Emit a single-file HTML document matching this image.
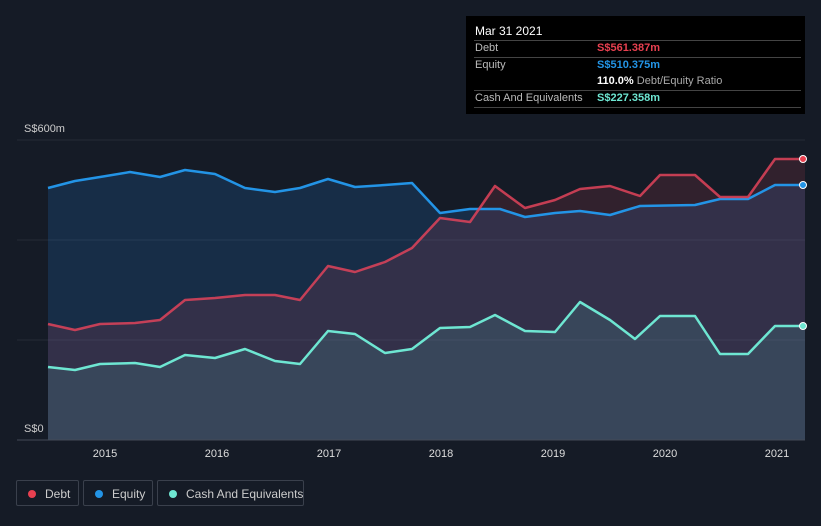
<!DOCTYPE html><html><head><style>
body{margin:0;width:821px;height:526px;background:#151b26;font-family:"Liberation Sans",sans-serif;overflow:hidden;position:relative}
.tip{position:absolute;left:466px;top:16px;width:339px;height:98px;background:#000;color:#bbb;font-size:11px}
.tip .r{position:absolute;left:8px;width:327px;border-top:1px solid #444}
.leg{position:absolute;top:480px;height:26px;border:1px solid #3a404c;border-radius:2px;color:#ccc;font-size:12px;line-height:26px;box-sizing:border-box;white-space:nowrap}
.leg i{position:absolute;left:11px;top:9px;width:8px;height:8px;border-radius:50%}
.leg span{position:absolute;left:28px}
</style></head><body>
<svg width="821" height="526" style="position:absolute;left:0;top:0">
<g stroke="#252b37" stroke-width="1"><line x1="17" y1="140" x2="805" y2="140"/><line x1="17" y1="240" x2="805" y2="240"/><line x1="17" y1="340" x2="805" y2="340"/></g>
<polygon fill="rgba(33,130,220,0.18)" points="48,188 75,181 100,177 130,172 160,177 185,170 215,174 245,188 275,192 300,188 328,179 355,187 385,185 412,183 440,213 470,209 500,209 525,217 555,213 580,211 610,215 640,206 695,205 720,199 748,199 775,185 805,185 805,440 48,440"/>
<polygon fill="rgba(200,70,90,0.16)" points="48,324 75,330 100,324 135,323 160,320 185,300 215,298 245,295 275,295 300,300 328,266 355,272 385,262 412,248 440,218 470,222 495,186 525,208 555,200 580,189 610,186 640,196 660,175 695,175 720,197 748,197 775,159 805,159 805,440 48,440"/>
<polygon fill="rgba(100,230,210,0.12)" points="48,367 75,370 100,364 135,363 160,367 185,355 215,358 245,349 275,361 300,364 328,331 355,334 385,353 412,349 440,328 470,327 495,315 525,331 555,332 580,302 610,320 635,339 660,316 695,316 720,354 748,354 775,326 805,326 805,440 48,440"/>
<line x1="17" y1="440" x2="805" y2="440" stroke="#444a55"/>
<text x="24" y="132" fill="#ccc" font-size="11" font-family="Liberation Sans">S$600m</text>
<text x="24" y="432" fill="#ccc" font-size="11" font-family="Liberation Sans">S$0</text>
<g fill="#ddd" font-size="11" font-family="Liberation Sans" text-anchor="middle"><text x="105" y="457">2015</text><text x="217" y="457">2016</text><text x="329" y="457">2017</text><text x="441" y="457">2018</text><text x="553" y="457">2019</text><text x="665" y="457">2020</text><text x="777" y="457">2021</text></g>
<g fill="none" stroke-width="2.5" stroke-linejoin="round">
<polyline stroke="#2394e6" points="48,188 75,181 100,177 130,172 160,177 185,170 215,174 245,188 275,192 300,188 328,179 355,187 385,185 412,183 440,213 470,209 500,209 525,217 555,213 580,211 610,215 640,206 695,205 720,199 748,199 775,185 805,185"/>
<polyline stroke="#e0435a" stroke-opacity=".85" points="48,324 75,330 100,324 135,323 160,320 185,300 215,298 245,295 275,295 300,300 328,266 355,272 385,262 412,248 440,218 470,222 495,186 525,208 555,200 580,189 610,186 640,196 660,175 695,175 720,197 748,197 775,159 805,159"/>
<polyline stroke="#6ee6d2" points="48,367 75,370 100,364 135,363 160,367 185,355 215,358 245,349 275,361 300,364 328,331 355,334 385,353 412,349 440,328 470,327 495,315 525,331 555,332 580,302 610,320 635,339 660,316 695,316 720,354 748,354 775,326 805,326"/>
</g>
<circle cx="803" cy="159" r="3.5" fill="#e84050" stroke="#fff"/><circle cx="803" cy="185" r="3.5" fill="#2394e6" stroke="#fff"/><circle cx="803" cy="326" r="3.5" fill="#6ee6d2" stroke="#fff"/>
</svg>
<div class="tip">
<div style="position:absolute;left:9px;top:8px;color:#fff;font-size:12px">Mar 31 2021</div>
<div class="r" style="top:24px"></div><div style="position:absolute;left:9px;top:26px">Debt</div><div style="position:absolute;left:131px;top:26px;color:#e84050;font-weight:bold">S$561.387m</div>
<div class="r" style="top:41px"></div><div style="position:absolute;left:9px;top:43px">Equity</div><div style="position:absolute;left:131px;top:43px;color:#2394e6;font-weight:bold">S$510.375m</div>
<div style="position:absolute;left:131px;top:59px;color:#aaa"><b style="color:#fff">110.0%</b> Debt/Equity Ratio</div>
<div class="r" style="top:74px"></div><div style="position:absolute;left:9px;top:76px">Cash And Equivalents</div><div style="position:absolute;left:131px;top:76px;color:#6ee6d2;font-weight:bold">S$227.358m</div>
<div class="r" style="top:91px"></div>
</div>
<div class="leg" style="left:16px;width:63px"><i style="background:#e84050"></i><span>Debt</span></div>
<div class="leg" style="left:83px;width:70px"><i style="background:#2394e6"></i><span>Equity</span></div>
<div class="leg" style="left:157px;width:147px"><i style="background:#6ee6d2"></i><span>Cash And Equivalents</span></div>
</body></html>
